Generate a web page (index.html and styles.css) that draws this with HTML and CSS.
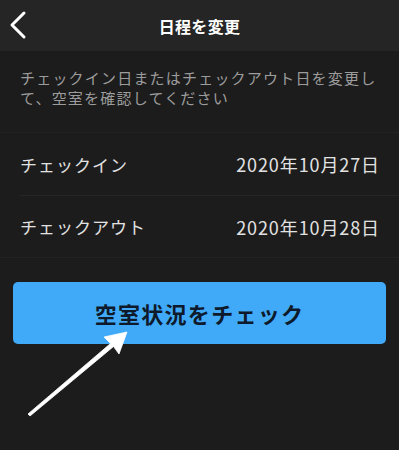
FILE: index.html
```html
<!DOCTYPE html>
<html lang="ja">
<head>
  <meta charset="UTF-8">
  <meta name="viewport" content="width=device-width, initial-scale=1.0">
  <title>日程を変更</title>
  <link rel="stylesheet" href="styles.css">
</head>
<body>
  <div class="header">
    <a href="#" class="back-btn">
      <svg width="20" height="30" viewBox="0 0 20 30">
        <polyline points="15,3 3,15 15,27" fill="none" stroke="#fff" stroke-width="3" stroke-linecap="round" stroke-linejoin="round"/>
      </svg>
    </a>
    <h1>日程を変更</h1>
  </div>

  <p class="desc">チェックイン日またはチェックアウト日を変更して、空室を確認してください</p>

  <ul class="date-list">
    <li>
      <span class="label">チェックイン</span>
      <span class="date">2020年10月27日</span>
    </li>
    <li>
      <span class="label">チェックアウト</span>
      <span class="date">2020年10月28日</span>
    </li>
  </ul>

  <button class="btn">空室状況をチェック</button>

  <svg class="arrow" width="399" height="450" viewBox="0 0 399 450">
    <polygon points="28,414 110.5,343.5 104,337 127,332 119,354 113.5,346.5 30,416" fill="#fff" stroke="#fff" stroke-width="0.8" stroke-linejoin="round"/>
  </svg>
</body>
</html>
```

FILE: styles.css
```css
* {
  box-sizing: border-box;
}

body {
  font-family: "Noto Sans CJK JP", "Noto Sans", sans-serif;
  margin: 0;
  background-color: #1c1c1c;
  color: #fff;
  height: 450px;
  position: relative;
  overflow: hidden;
}

.header {
  height: 51px;
  background-color: #252525;
  display: flex;
  align-items: center;
  justify-content: center;
  position: relative;
}

.header h1 {
  margin: 0;
  font-size: 16px;
  font-weight: bold;
  letter-spacing: 0.3px;
}

.back-btn {
  position: absolute;
  left: 9px;
  top: 10px;
  display: block;
  height: 30px;
}

.desc {
  margin: 0;
  padding: 17px 20px 24px;
  font-size: 15px;
  line-height: 20px;
  letter-spacing: 1.2px;
  color: #9c9c9c;
}

.date-list {
  list-style: none;
  margin: 0;
  padding: 0;
  border-top: 1px solid #232323;
  border-bottom: 1px solid #232323;
}

.date-list li {
  display: flex;
  align-items: center;
  justify-content: space-between;
  height: 62px;
  margin-left: 20px;
  padding-right: 20px;
  font-size: 17px;
  color: #e2e2e2;
}

.date-list li + li {
  border-top: 1px solid #262626;
}

.date-list .label {
  letter-spacing: 1px;
}

.date-list .date {
  font-size: 18px;
  letter-spacing: 0.9px;
  margin-right: -1px;
}

.btn {
  display: block;
  margin: 24px 13px 0;
  width: calc(100% - 26px);
  height: 62px;
  background-color: #40aaf8;
  color: #0e1a2b;
  border: none;
  border-radius: 5px;
  font-family: inherit;
  font-size: 22px;
  font-weight: bold;
  letter-spacing: 1.3px;
  cursor: pointer;
}

.arrow {
  position: absolute;
  left: 0;
  top: 0;
  pointer-events: none;
}
```
